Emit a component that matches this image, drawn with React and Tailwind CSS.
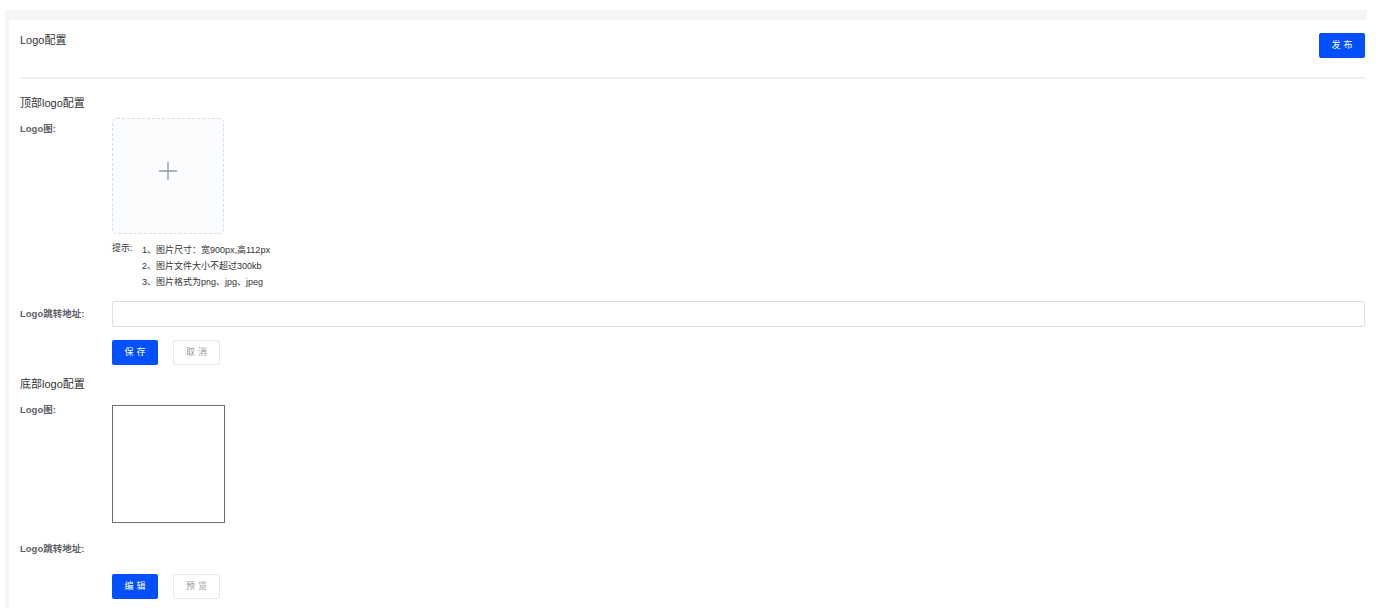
import React from "react";

const FONT = { fontFamily: '"Liberation Sans", "Noto Sans CJK SC", sans-serif' };

function Btn({ primary, children }) {
  return primary ? (
    <button className="w-[46px] h-[25px] rounded-[2px] bg-[#0050ff] text-white text-[9px] tracking-[3px] pl-[3px] leading-none">
      {children}
    </button>
  ) : (
    <button className="w-[47px] h-[25px] rounded-[2px] border border-[#e4e6ea] bg-white text-[#9a9a9a] text-[9px] tracking-[3px] pl-[3px] leading-none">
      {children}
    </button>
  );
}

function Label({ children, className = "" }) {
  return (
    <div className={"w-[92px] shrink-0 text-[9.5px] leading-[12px] font-bold text-[#5f6268] " + className}>
      {children}
    </div>
  );
}

export default function App() {
  return (
    <div style={FONT} className="w-[1388px] h-[608px] overflow-hidden bg-white pt-[10px] pl-[5px] pr-[21px]">
      <div className="bg-[#f4f5f7] pl-[4px] pt-[10px] h-[620px]">
        <div className="bg-white h-full pl-[11px] pr-[2px]">
          {/* header */}
          <div className="flex justify-between items-start pt-[13px]">
            <div className="text-[11px] leading-[12px] text-[#333] mt-[1px]">Logo配置</div>
            <Btn primary>发布</Btn>
          </div>
          <div className="mt-[19px] h-[2px] bg-[#efefef]" />

          {/* top logo */}
          <div className="mt-[17px] text-[11px] leading-[14px] text-[#333]">顶部logo配置</div>
          <div className="flex mt-[8px]">
            <Label className="mt-[5px]">Logo图:</Label>
            <div>
              <div className="w-[112px] h-[116px] rounded-[5px] border border-dashed border-[#d6dbe4] bg-[#fbfcfd] flex items-center justify-center">
                <svg width="20" height="20" viewBox="0 0 20 20" className="-mt-[10px]">
                  <path d="M10 1 V19 M1 10 H19" stroke="#8f96a3" strokeWidth="1.3" fill="none" />
                </svg>
              </div>
              <div className="flex mt-[8px] text-[9px] text-[#333]">
                <div className="w-[30px] leading-[12px]">提示:</div>
                <div className="leading-[16px]">
                  <div>1、图片尺寸：宽900px,高112px</div>
                  <div>2、图片文件大小不超过300kb</div>
                  <div>3、图片格式为png、jpg、jpeg</div>
                </div>
              </div>
            </div>
          </div>
          <div className="flex items-center mt-[11px]">
            <Label>Logo跳转地址:</Label>
            <input className="flex-1 h-[26px] border border-[#dcdfe6] rounded-[2px] outline-none px-2 text-[10px]" />
          </div>
          <div className="flex gap-[15px] ml-[92px] mt-[13px]">
            <Btn primary>保存</Btn>
            <Btn>取消</Btn>
          </div>

          {/* bottom logo */}
          <div className="mt-[12px] text-[11px] leading-[14px] text-[#333]">底部logo配置</div>
          <div className="flex mt-[14px]">
            <Label className="mt-[-1px]">Logo图:</Label>
            <div className="w-[113px] h-[118px] border border-[#6e6e6e] bg-white" />
          </div>
          <div className="flex mt-[20px]">
            <Label>Logo跳转地址:</Label>
          </div>
          <div className="flex gap-[15px] ml-[92px] mt-[19px]">
            <Btn primary>编辑</Btn>
            <Btn>预览</Btn>
          </div>
        </div>
      </div>
    </div>
  );
}
